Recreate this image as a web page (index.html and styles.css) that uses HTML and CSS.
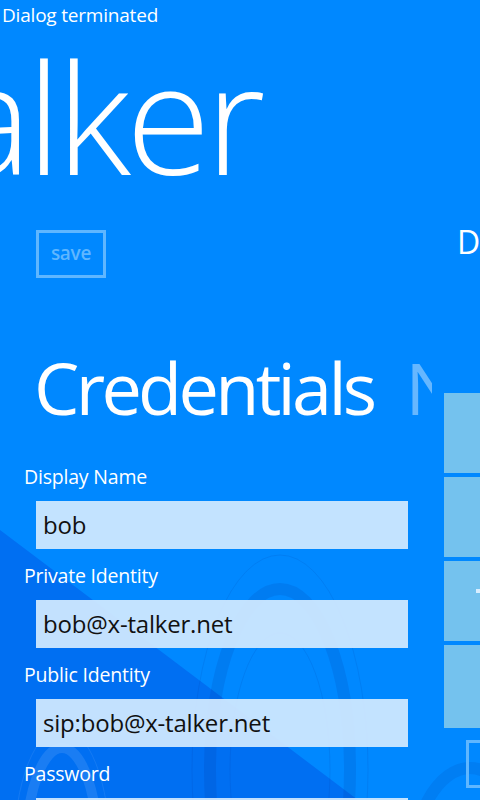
FILE: index.html
```html
<!DOCTYPE html>
<html>
<head>
<meta charset="utf-8">
<link rel="stylesheet" href="styles.css">
</head>
<body>
<div class="screen">
  <svg class="bg" width="480" height="800" viewBox="0 0 480 800" aria-hidden="true">
    <polygon points="0,530 358,800 0,800" fill="#006ff2"/>
    <ellipse cx="280" cy="770" rx="88" ry="215" fill="none" stroke="rgba(0,40,140,0.10)" stroke-width="1"/>
    <ellipse cx="280" cy="770" rx="70" ry="181" fill="none" stroke="rgba(0,40,140,0.12)" stroke-width="12"/>
    <ellipse cx="280" cy="770" rx="50" ry="137" fill="none" stroke="rgba(0,40,140,0.10)" stroke-width="1"/>
    <ellipse cx="62" cy="850" rx="48" ry="122" fill="none" stroke="rgba(255,255,255,0.08)" stroke-width="1"/>
    <ellipse cx="62" cy="850" rx="36" ry="102" fill="none" stroke="rgba(255,255,255,0.10)" stroke-width="10"/>
    <ellipse cx="470" cy="880" rx="60" ry="112" fill="none" stroke="rgba(0,40,140,0.10)" stroke-width="12"/>
  </svg>

  <div class="status">Dialog terminated</div>
  <div class="title">alker</div>

  <div class="panorama">
    <section class="pano-item first">
      <div class="appbar">
        <button class="save-btn">save</button>
      </div>
      <div class="pivot-headers">
        <span class="pivot active">Credentials</span>
        <span class="pivot">N</span>
      </div>
      <form class="form">
        <label class="field-label">Display Name</label>
        <div class="input">bob</div>
        <label class="field-label">Private Identity</label>
        <div class="input">bob@x-talker.net</div>
        <label class="field-label">Public Identity</label>
        <div class="input">sip:bob@x-talker.net</div>
        <label class="field-label">Password</label>
        <div class="input"></div>
      </form>
    </section>
    <section class="pano-item second">
      <div class="second-header">D</div>
      <div class="tiles">
        <div class="tile"></div>
        <div class="tile"></div>
        <div class="tile"><span class="tile-mark"></span></div>
        <div class="tile"></div>
      </div>
      <div class="outline-box"></div>
    </section>
  </div>
</div>
</body>
</html>
```

FILE: styles.css
```css
* { box-sizing: border-box; }
html, body {
  margin: 0;
  padding: 0;
  width: 480px;
  height: 800px;
  overflow: hidden;
  background: #0088ff;
}
.screen {
  position: relative;
  width: 480px;
  height: 800px;
  overflow: hidden;
  font-family: "Open Sans", "Noto Sans", sans-serif;
  color: #fff;
}
.bg {
  position: absolute;
  left: 0;
  top: 0;
  z-index: 0;
}
.status, .title, .panorama {
  position: relative;
  z-index: 1;
}
.status {
  font-size: 19px;
  line-height: 30px;
  padding-left: 2px;
  height: 30px;
  letter-spacing: -0.2px;
}
.title {
  font-weight: 300;
  font-size: 154px;
  line-height: 190px;
  margin-left: -50px;
  margin-top: -10px;
  height: 210px;
  letter-spacing: -5px;
  white-space: nowrap;
}
.panorama {
  display: flex;
  width: 600px;
}
.pano-item.first {
  width: 432px;
  flex: none;
  overflow: hidden;
  padding-left: 24px;
}
.appbar {
  padding-left: 12px;
  height: 104px;
}
.save-btn {
  width: 70px;
  height: 48px;
  border: 3px solid #5fb6ff;
  background: transparent;
  color: #5fb6ff;
  font-family: "Open Sans", "Noto Sans", sans-serif;
  font-size: 19px;
  font-weight: 600;
  letter-spacing: -0.3px;
  padding: 0 0 2px 0;
  margin: 0;
}
.pivot-headers {
  display: flex;
  gap: 32px;
  white-space: nowrap;
  padding-left: 10px;
  padding-top: 3px;
  height: 130px;
}
.pivot {
  font-size: 72px;
  line-height: 100px;
  font-weight: 400;
  letter-spacing: -3.7px;
}
.pivot:not(.active) {
  color: rgba(255,255,255,0.4);
}
.form {
  display: flex;
  flex-direction: column;
  margin-top: -14px;
}
.field-label {
  font-size: 19.5px;
  line-height: 26px;
  height: 51px;
  padding-top: 14px;
  letter-spacing: -0.2px;
}
.input {
  margin-left: 12px;
  width: 372px;
  height: 48px;
  flex: none;
  background: rgba(210,234,255,0.93);
  color: #111;
  font-size: 24px;
  line-height: 48px;
  padding-left: 7px;
  letter-spacing: -0.2px;
}
.pano-item.second {
  margin-left: 12px;
  width: 160px;
  flex: none;
}
.second-header {
  font-size: 32px;
  line-height: 24px;
  padding-left: 13px;
  height: 163px;
}
.tiles {
  display: flex;
  flex-direction: column;
  gap: 4px;
}
.tile {
  width: 100px;
  height: 80px;
  background: #74c2ee;
  position: relative;
}
.tile:last-child { height: 83px; }
.tile-mark {
  position: absolute;
  left: 32px;
  top: 28px;
  width: 6px;
  height: 4px;
  background: #d8eeff;
}
.outline-box {
  margin-top: 12px;
  margin-left: 22px;
  width: 60px;
  height: 48px;
  border: 3px solid #5fb6ff;
}
```
